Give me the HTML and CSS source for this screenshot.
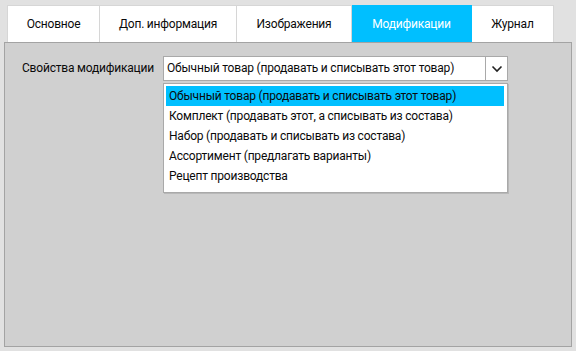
FILE: index.html
```html
<!DOCTYPE html>
<html>
<head>
<meta charset="utf-8">
<link rel="stylesheet" href="styles.css">
</head>
<body>
<div class="tabs">
  <div class="tab t1">Основное</div>
  <div class="tab t2">Доп. информация</div>
  <div class="tab t3">Изображения</div>
  <div class="tab t4 active">Модификации</div>
  <div class="tab t5">Журнал</div>
</div>
<div class="panel">
  <div class="row">
    <div class="label">Свойства модификации</div>
    <div class="combo-wrap">
      <div class="combo">
        <div class="combo-text">Обычный товар (продавать и списывать этот товар)</div>
        <div class="combo-btn">
          <svg width="12" height="8" viewBox="0 0 12 8"><path d="M1.5 1.5 L6 6 L10.5 1.5" fill="none" stroke="#222" stroke-width="1.6"/></svg>
        </div>
      </div>
      <div class="list">
        <div class="item selected">Обычный товар (продавать и списывать этот товар)</div>
        <div class="item">Комплект (продавать этот, а списывать из состава)</div>
        <div class="item">Набор (продавать и списывать из состава)</div>
        <div class="item">Ассортимент (предлагать варианты)</div>
        <div class="item">Рецепт производства</div>
      </div>
    </div>
  </div>
</div>
</body>
</html>
```
FILE: styles.css
```css
html, body {
  margin: 0;
  padding: 0;
}
body {
  width: 576px;
  height: 351px;
  background: #e1e1e1;
  font-family: Roboto, "Noto Sans", sans-serif;
  font-size: 12px;
  letter-spacing: -0.2px;
  color: #0a0a0a;
  overflow: hidden;
}
.tabs {
  display: flex;
  margin-left: 7px;
  padding-top: 5px;
  height: 42px;
  box-sizing: border-box;
}
.tab {
  background: #fff;
  border: 1px solid #d6d6d6;
  border-bottom: none;
  border-left: none;
  display: flex;
  align-items: center;
  justify-content: center;
  box-sizing: border-box;
  height: 37px;
}
.t1 { width: 93px; border-left: 1px solid #d6d6d6; }
.t2 { width: 137px; }
.t3 { width: 115px; }
.t4 { width: 120px; }
.t5 { width: 82px; }
.tab.active {
  background: #00bfff;
  color: #fff;
  border-color: #00bfff;
}
.panel {
  margin: 0 4px;
  height: 305px;
  box-sizing: border-box;
  background: #d0d0d0;
  border: 1px solid #a3a3a3;
  padding: 13px 0 0 17px;
}
.row {
  display: flex;
  align-items: flex-start;
}
.label {
  width: 141px;
  height: 25px;
  line-height: 25px;
}
.combo {
  width: 345px;
  height: 25px;
  box-sizing: border-box;
  background: #fff;
  border: 1px solid #a9a9a9;
  display: flex;
}
.combo-text {
  flex: 1;
  line-height: 23px;
  padding-left: 3px;
  white-space: nowrap;
}
.combo-btn {
  width: 21px;
  border-left: 1px solid #a9a9a9;
  display: flex;
  align-items: center;
  justify-content: center;
}
.list {
  margin-top: 2px;
  width: 345px;
  box-sizing: border-box;
  background: #fff;
  border: 1px solid #a9a9a9;
  box-shadow: 1px 1px 0 #b8b8b8;
  padding: 2px 3px 6px 2px;
}
.item {
  height: 20px;
  line-height: 20px;
  padding-left: 3px;
  white-space: nowrap;
}
.item.selected {
  background: #00bfff;
}
```
